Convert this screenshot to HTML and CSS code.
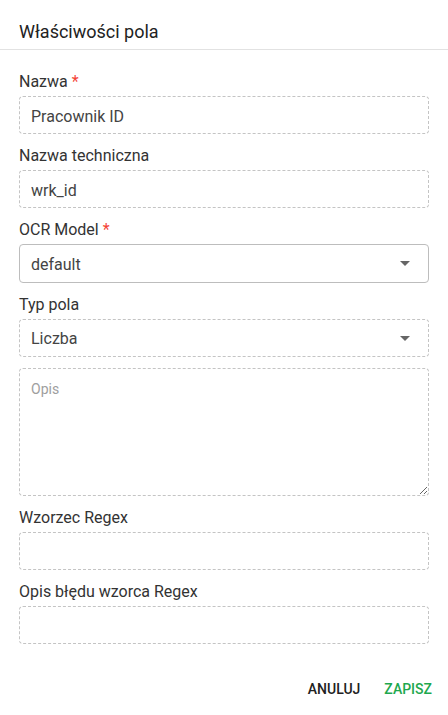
FILE: index.html
```
<!DOCTYPE html>
<html lang="pl">
<head>
<meta charset="utf-8">
<title>Właściwości pola</title>
<link rel="stylesheet" href="styles.css">
</head>
<body>
<div class="dialog">
  <div class="dialog-title">Właściwości pola</div>
  <form class="dialog-content">
    <div class="field">
      <label class="label">Nazwa <span class="req">*</span></label>
      <input class="input" type="text" value="Pracownik ID">
    </div>
    <div class="field">
      <label class="label">Nazwa techniczna</label>
      <input class="input" type="text" value="wrk_id">
    </div>
    <div class="field">
      <label class="label">OCR Model <span class="req">*</span></label>
      <div class="select select-solid">
        <span class="select-value">default</span>
        <svg class="arrow" width="10" height="5" viewBox="0 0 10 5"><path d="M0 0H10L5 5Z" fill="#666"/></svg>
      </div>
    </div>
    <div class="field">
      <label class="label">Typ pola</label>
      <div class="select">
        <span class="select-value">Liczba</span>
        <svg class="arrow" width="10" height="5" viewBox="0 0 10 5"><path d="M0 0H10L5 5Z" fill="#666"/></svg>
      </div>
    </div>
    <div class="field field-tight">
      <textarea class="textarea" placeholder="Opis"></textarea>
    </div>
    <div class="field">
      <label class="label">Wzorzec Regex</label>
      <input class="input" type="text" value="">
    </div>
    <div class="field">
      <label class="label">Opis błędu wzorca Regex</label>
      <input class="input" type="text" value="">
    </div>
  </form>
  <div class="dialog-actions">
    <button class="btn btn-cancel" type="button">Anuluj</button>
    <button class="btn btn-save" type="button">Zapisz</button>
  </div>
</div>
</body>
</html>
```
FILE: styles.css
```
* { box-sizing: border-box; }
html, body { margin: 0; padding: 0; background: #fff; }
body {
  font-family: Roboto, "Liberation Sans", Arial, sans-serif;
  color: #333;
}
.dialog { width: 448px; }
.dialog-title {
  font-size: 18px;
  line-height: 24px;
  color: #222;
  padding: 20px 19px 5px;
  border-bottom: 1px solid #e2e2e2;
}
.dialog-content {
  display: flex;
  flex-direction: column;
  gap: 10px;
  padding: 20px 19px 0;
  margin: 0;
}
.field {
  display: flex;
  flex-direction: column;
  gap: 2px;
}
.field-tight { margin-top: 1px; }
.label {
  font-size: 16px;
  line-height: 24px;
  color: #333;
}
.req { color: #f44336; }
.input, .select, .textarea {
  width: 100%;
  height: 38px;
  border: 1px dashed #c4c4c4;
  border-radius: 4px;
  padding: 0 11px;
  font-family: inherit;
  font-size: 16px;
  color: #444;
  background: #fff;
  outline: none;
  margin: 0;
}
.input { padding-top: 2px; }
.select {
  display: flex;
  align-items: center;
  justify-content: space-between;
  padding-top: 1px;
  padding-right: 18px;
}
.select-solid {
  border: 1px solid #bdbdbd;
  height: 39px;
}
.arrow { display: block; margin-top: -1px; }
.textarea {
  height: 128px;
  padding: 10px 11px;
  font-size: 14px;
  line-height: 20px;
  resize: vertical;
}
.textarea::placeholder { color: #9e9e9e; }
.dialog-actions {
  display: flex;
  justify-content: flex-end;
  gap: 8px;
  padding: 27px 8px 8px;
}
.btn {
  height: 36px;
  padding: 0 8px;
  border: none;
  background: transparent;
  font-family: inherit;
  font-size: 14px;
  font-weight: 500;
  text-transform: uppercase;
  cursor: pointer;
}
.btn-cancel { color: #212121; }
.btn-save { color: #1ea84e; }
```
